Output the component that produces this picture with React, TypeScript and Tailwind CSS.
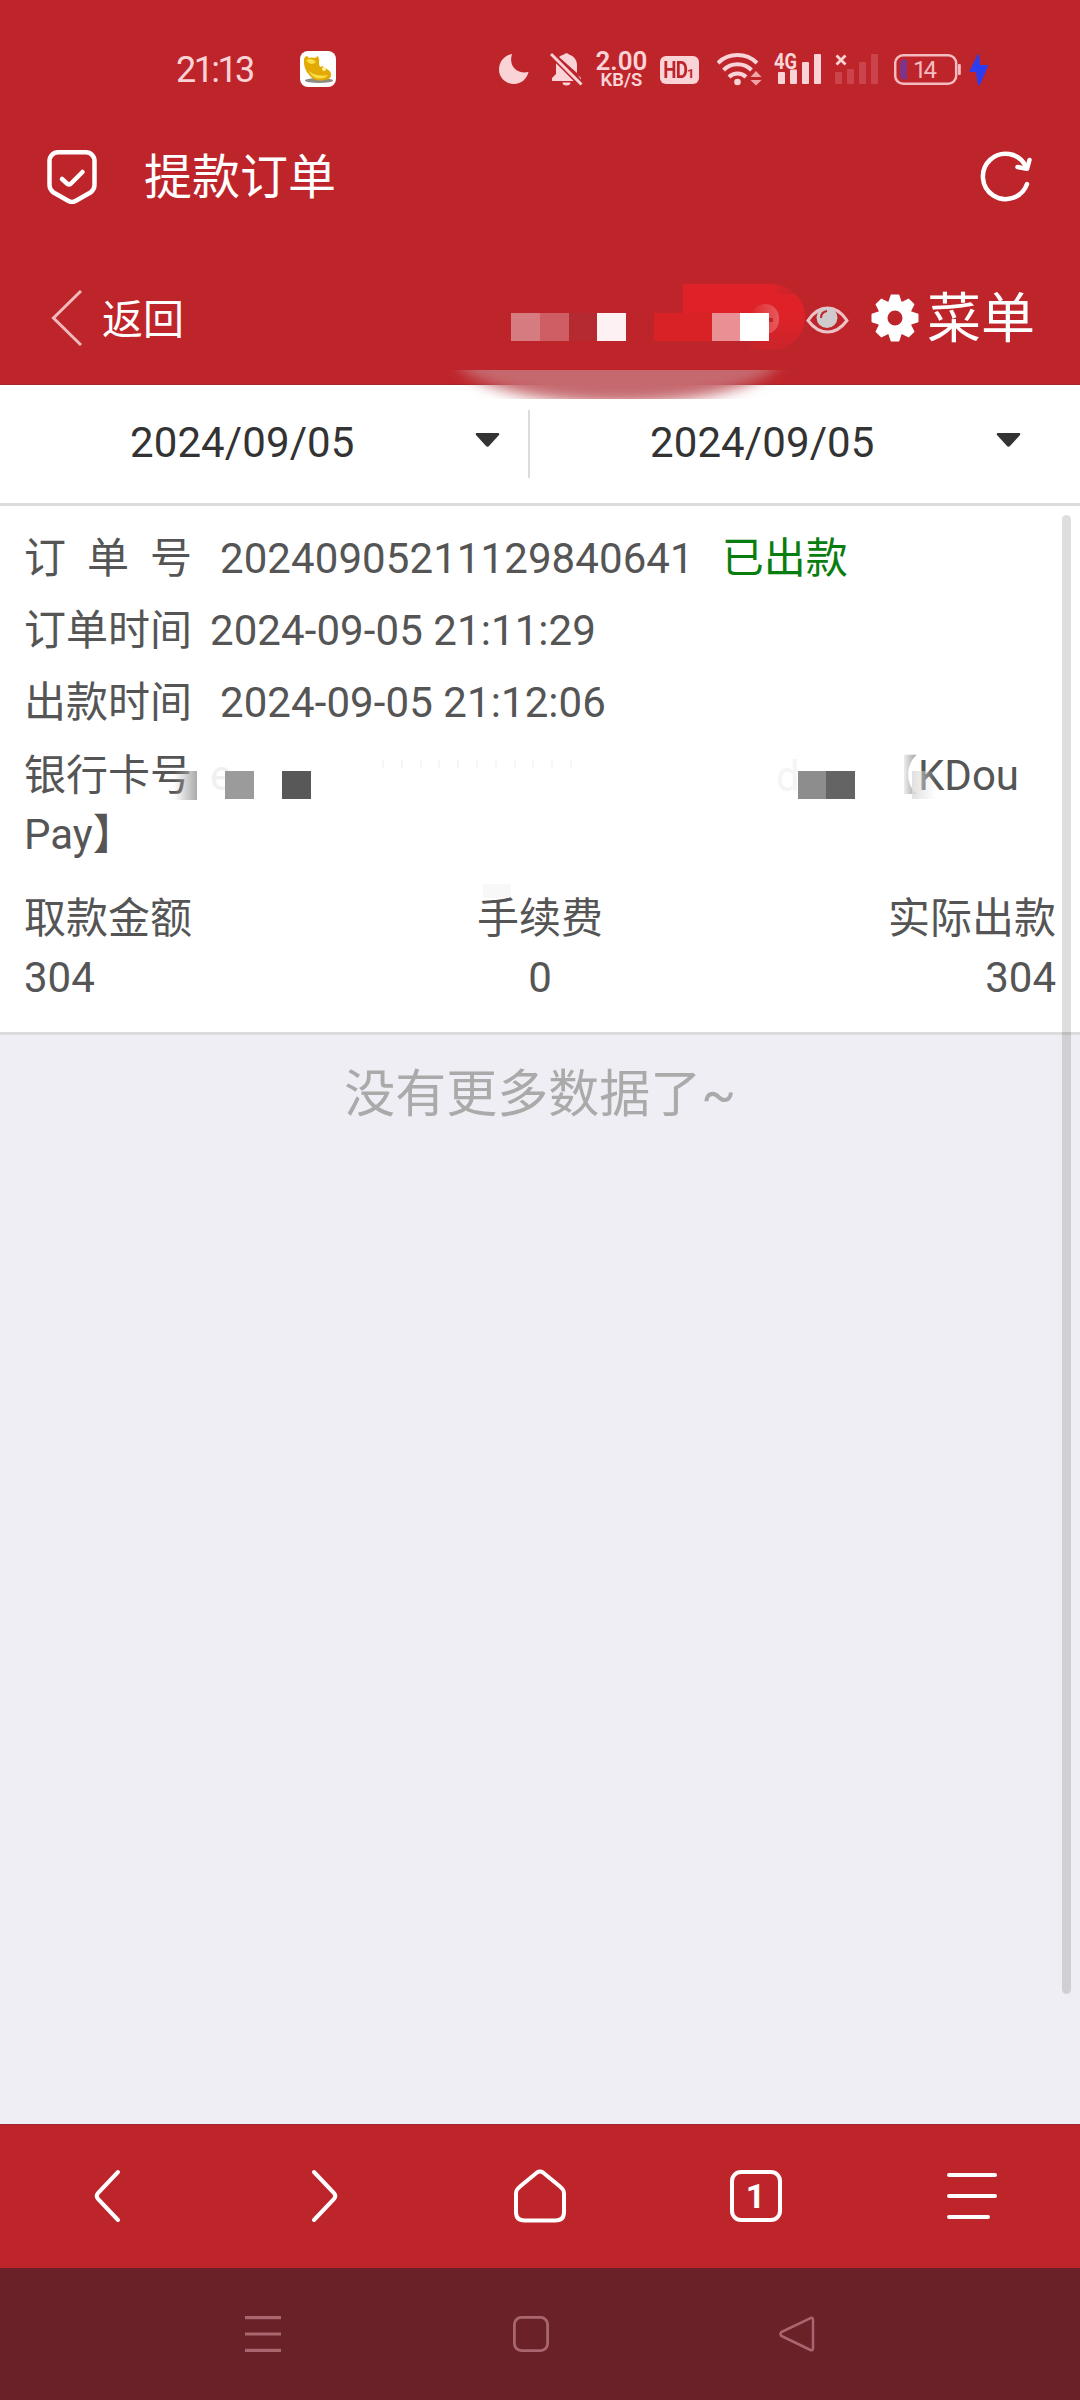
import type { ReactNode } from 'react'

const ORDER = {
  no: '20240905211129840641',
  status: '已出款',
  createdAt: '2024-09-05 21:11:29',
  paidAt: '2024-09-05 21:12:06',
}

const AMOUNTS = [
  { label: '取款金额', value: '304', align: 'text-left' },
  { label: '手续费', value: '0', align: 'text-center' },
  { label: '实际出款', value: '304', align: 'text-right' },
]

function StatusBar() {
  return (
    <div className="flex h-[137px] shrink-0 items-center text-[#f9d3d6]">
      <span className="ml-[176px] mt-[2px] w-[79px] whitespace-nowrap text-[36px] leading-[36px] tracking-[-2.600px]">21:13</span>

      {/* App notification */}
      <svg className="ml-[45px] h-9 w-9 shrink-0" viewBox="0 0 36 36">
        <rect width="36" height="36" rx="8" fill="#fff" />
        <ellipse cx="19" cy="29.500" rx="14" ry="2.500" fill="#8d8d86" />
        <path d="M4 8q1-3 3-3l2 2q3-1 6 0l3-2q2 4 1 8l1 3q3-2 5 1 6 3 6 6 1 5-6 6-10 2-15-4Q3 18 4 8z" fill="#e3a905" />
        <path d="M6 9q6-3 10 2-5 5-10-2zM9 20q7 6 19 4-4 5-12 3-6-3-7-7z" fill="#f9df45" />
        <circle cx="24" cy="18" r="2" fill="#fff3a0" />
      </svg>

      {/* Do not disturb */}
      <svg className="ml-[163px] h-9 w-[30px] shrink-0" viewBox="0 0 30 36" fill="currentColor">
        <path d="M13 3C4 4.500 0 12 0 18.500 0 27 7 33 15 33c7 0 13-5 14.500-12C19 23.500 9 16 13 3z" />
      </svg>

      {/* Muted bell */}
      <svg className="ml-[21px] h-9 w-[33px] shrink-0" viewBox="0 0 33 36" fill="currentColor">
        <path d="M14 3.500a3 3 0 0 1 5 0c5 1.500 8 5.500 8 10.500v8L9 6c1.500-1.300 3-2 5-2.500zM6 11l18 19H2v-3l4-4zM28 24l3 3v2zM12.500 31.500h8a4 3 0 0 1-8 0z" />
        <path d="M1.500 3.500l30 30" stroke="#be252b" strokeWidth="6" />
        <path d="M1 3l30.500 30.500" stroke="currentColor" strokeWidth="3" />
      </svg>

      <div className="ml-[12px] mt-[2px] flex w-[53px] flex-col items-center whitespace-nowrap font-semibold">
        <span className="text-[26px] leading-[20px]">2.00</span>
        <span className="text-[18.500px] leading-[18px]">KB/S</span>
      </div>

      <div className="ml-[12px] mt-[2px] flex h-[28px] w-[39px] items-center justify-center rounded-[6px] bg-[#f9d3d6] font-bold text-[#be252b]">
        <span className="-mx-1 text-[24px] leading-none tracking-[-1px] [transform:scaleX(0.78)]">HD</span>
        <span className="mt-[7px] text-[13px] leading-none">1</span>
      </div>

      {/* Wifi */}
      <svg className="ml-[18px] h-9 w-[46px] shrink-0" viewBox="0 0 46 36" fill="none" stroke="currentColor" strokeWidth="4">
        <path d="M1 12a28 28 0 0 1 39 0M6.500 19a20 20 0 0 1 28 0M12 26a12 12 0 0 1 17 0" />
        <circle cx="20.500" cy="31" r="3.300" fill="currentColor" stroke="none" />
        <path d="M39 20l5.500 6h-11zM39 34.500l5.500-5.500h-11z" fill="#f0a5ab" stroke="none" />
      </svg>

      {/* Sim 1 */}
      <svg className="ml-[9px] h-9 w-[50px] shrink-0 overflow-visible" viewBox="-3 0 50 36" fill="currentColor">
        <text x="-1" y="17.500" fontSize="22" fontWeight="700" textLength="23" lengthAdjust="spacingAndGlyphs">4G</text>
        <rect x="3" y="21" width="7" height="12" rx="1" />
        <rect x="15" y="18.500" width="7" height="14.500" rx="1" />
        <rect x="27" y="11" width="7" height="22" rx="1" />
        <rect x="39" y="3" width="7" height="30" rx="1" />
      </svg>

      {/* Sim 2, no signal */}
      <svg className="ml-[13px] h-9 w-[44px] shrink-0" viewBox="0 0 44 36" fill="#cb434b">
        <path d="M1.500 4.500l9 9M10.500 4.500l-9 9" stroke="#f9d3d6" strokeWidth="2.800" />
        <rect x="0" y="21" width="7" height="12" rx="1" />
        <rect x="12" y="18" width="7" height="15" rx="1" />
        <rect x="24" y="11" width="7" height="22" rx="1" />
        <rect x="36" y="3" width="7" height="30" rx="1" />
      </svg>

      {/* Battery */}
      <svg className="ml-[15px] h-9 w-[67px] shrink-0" viewBox="0 0 67 36">
        <rect x="1.200" y="4.200" width="61" height="28.600" rx="8" fill="none" stroke="#f4bcc0" strokeWidth="2.500" />
        <path d="M13 8.500v20h-3a4 4 0 0 1-4-4v-12a4 4 0 0 1 4-4z" fill="#7e3589" />
        <rect x="64" y="13" width="2.800" height="11" rx="1" fill="#f4bcc0" />
        <text x="31" y="27" fontSize="24" textAnchor="middle" textLength="24" fill="#f4bcc0">14</text>
      </svg>
      <svg className="ml-[8px] h-9 w-5 shrink-0" viewBox="0 0 20 36" fill="#2c3df0">
        <path d="M9 3L0 21h7l2 13h2l8.500-20H11L10 3z" />
      </svg>
    </div>
  )
}

function TitleBar() {
  return (
    <div className="flex h-[79px] shrink-0 items-center text-white">
      <svg className="ml-[47px] h-[54px] w-[50px]" viewBox="0 0 50 54" fill="none" stroke="currentColor" strokeWidth="4.500" strokeLinecap="round" strokeLinejoin="round">
        <path d="M11 2.300h28a8.500 8.500 0 0 1 8.500 8.500v24c0 4-1.500 6-4.500 8L28.500 51a7 7 0 0 1-7 0L7 42.800c-3-2-4.500-4-4.500-8v-24A8.500 8.500 0 0 1 11 2.300z" />
        <path d="M15 29l5.500 5q1.500 1 3 0L35.500 22" />
      </svg>
      <h1 className="ml-[47px] mt-[3px] flex-1 text-[48px] leading-none">提款订单</h1>
      <svg className="mr-[48px] mb-[2px] h-[52px] w-[52px]" viewBox="0 0 52 52" fill="none" stroke="currentColor" strokeWidth="4.500" strokeLinecap="round" strokeLinejoin="round">
        <path d="M47 34A22.700 22.700 0 1 1 45.500 15.500" />
        <path d="M37.500 17l9.500 1.800L49.500 10" />
      </svg>
    </div>
  )
}

// Blurred account name and balance
function AccountMask() {
  return (
    <div className="relative h-[68px] w-[294px]">
      <div className="absolute left-[172px] top-0 h-[66px] w-[122px] rounded-r-[34px] bg-gradient-to-b from-[#df2228] from-50% to-[#c9242a]" />
      <div className="absolute left-[172px] top-[57px] h-[11px] w-[80px] bg-gradient-to-r from-[#be252b] from-80% to-[#be252b]/0" />
      <div className="absolute left-[260px] top-0 h-[10px] w-[30px] bg-gradient-to-r from-[#be252b]/0 to-[#be252b]" />
      <div className="absolute left-[143px] top-[29px] h-[28px] w-[60px] bg-[#d82226]" />
      <div className="absolute left-[240px] top-[20px] h-[30px] w-[28px] rounded-full bg-gradient-to-l from-[#e6595e] to-[#df2228]" />
      <div className="absolute left-[258px] top-[34px] h-[4px] w-[4px] bg-[#be252b]" />
      <div className="absolute left-0 top-[29px] flex h-[28px]">
        <div className="w-[29px] bg-[#d67b80]" />
        <div className="w-[29px] bg-[#cf5e64]" />
        <div className="w-[28px] bg-[#b42a30]" />
        <div className="w-[29px] bg-[#fdf1f3]" />
        <div className="ml-[86px] w-[28px] bg-[#ea8f94]" />
        <div className="w-[29px] bg-white" />
      </div>
    </div>
  )
}

function PageHeader() {
  return (
    <div className="relative flex h-[169px] shrink-0 items-center border-b border-[#a3262c] pt-[35px] text-white">
      <svg className="ml-[51px] h-[56px] w-[31px]" viewBox="0 0 31 56" fill="none" stroke="#f0babd" strokeWidth="3">
        <path d="M30 1L2.500 28 30 55" />
      </svg>
      <span className="ml-[20px] mt-[6px] flex-1 text-[41px] leading-none">返回</span>
      <AccountMask />
      <svg className="ml-[1px] mt-[4px] h-[28px] w-[43px]" viewBox="0 0 43 28" fill="none">
        <path d="M2 14.500C8 5.500 14 2 21.500 2S35 5.500 41 14.500C35 22.500 29 26 21.500 26S8 22.500 2 14.500z" stroke="#ecc3c6" strokeWidth="3" />
        <circle cx="21" cy="11.500" r="10.500" fill="#cfcbcc" />
        <path d="M15 12q0-6 6-7" stroke="#be252b" strokeWidth="2" />
      </svg>
      <svg className="ml-[22px] h-[48px] w-[48px]" viewBox="-24 -24 48 48" fill="currentColor">
        <circle r="12.500" fill="none" stroke="currentColor" strokeWidth="10" />
        {[0, 45, 90, 135, 180, 225, 270, 315].map(deg => (
          <path key={deg} d="M-7-15L-4.500-22.500q0-1 1-1h7q1 0 1 1L7-15z" transform={`rotate(${deg})`} />
        ))}
      </svg>
      <span className="ml-[8px] mr-[45px] mt-[5px] text-[54px] leading-none">菜单</span>

      <div className="absolute left-[438px] top-[154px] h-[29px] w-[358px] overflow-hidden">
        <div className="absolute -top-[65px] left-[16px] h-[98px] w-[328px] rounded-[50%] bg-[#c5696e] blur-[7px]" />
      </div>
    </div>
  )
}

function DatePicker({ value }: { value: string }) {
  return (
    <div className="flex flex-1 items-center justify-between">
      <span className="text-[42px] leading-[59px] tracking-[0.100px] text-[#333]">{value}</span>
      <svg className="mb-[4px] h-[14px] w-[25px]" viewBox="0 0 25 14">
        <path d="M2 0h21q2 0 1 2L14 13q-1.500 1.500-3 0L1 2Q0 0 2 0z" fill="#333" />
      </svg>
    </div>
  )
}

function OrderRow({ label, children }: { label: string; children: ReactNode }) {
  return (
    <div className="flex">
      <span className="flex w-[168px] shrink-0 justify-between">
        {label.split('').map(ch => <span key={ch}>{ch}</span>)}
      </span>
      {children}
    </div>
  )
}

function OrderCard() {
  return (
    <div className="shrink-0 border-b-[3px] border-[#dcdcdc] bg-white px-6 pb-[25px] pt-[23px] text-[42px] leading-[59px] text-[#555]">
      <div className="flex flex-col gap-[13px]">
        <OrderRow label="订单号">
          <span className="ml-[28px] tracking-[0.080px]">{ORDER.no}</span>
          <span className="ml-[28px] text-[#0a7d10]">{ORDER.status}</span>
        </OrderRow>
        <OrderRow label="订单时间">
          <span className="ml-[18px] tracking-[0.080px]">{ORDER.createdAt}</span>
        </OrderRow>
        <OrderRow label="出款时间">
          <span className="ml-[28px] tracking-[0.080px]">{ORDER.paidAt}</span>
        </OrderRow>

        {/* Card number is masked between the label and the bank name */}
        <div className="relative mt-[1px]">
          <div className="flex justify-between pr-[37px]">
            <span>银行卡号</span>
            <span>
              <span className="bg-gradient-to-r from-white from-60% to-[#999] bg-clip-text text-transparent">【</span>
              KDou
            </span>
          </div>
          <div>Pay】</div>
          <div className="absolute left-[150px] top-[25px] h-[29px] w-[23px] bg-gradient-to-r from-transparent to-[#aaa]" />
          <div className="absolute left-[186px] top-[14px] leading-[32px] text-[#f0f0f0]">e</div>
          <div className="absolute left-[201px] top-[25px] h-[28px] w-[29px] bg-[#9b9b9b]" />
          <div className="absolute left-[258px] top-[25px] h-[28px] w-[29px] bg-[#585858]" />
          <div className="absolute left-[358px] top-[14px] flex h-[8px] w-[190px] justify-between">
            {[...Array(11)].map((_, i) => <div key={i} className="w-[2px] bg-[#f6f6f6]" />)}
          </div>
          <div className="absolute left-[752px] top-[11px] leading-[40px] text-[#f5f5f5]">d</div>
          <div className="absolute left-[774px] top-[25px] h-[28px] w-[29px] bg-[#8d8d8d]" />
          <div className="absolute left-[802px] top-[25px] h-[28px] w-[29px] bg-[#646464]" />
          <div className="absolute left-[888px] top-[25px] h-[28px] w-[24px] bg-gradient-to-r from-[#ddd]/90 to-transparent" />
        </div>
      </div>

      <div className="relative mt-[25px] grid grid-cols-3">
        <div className="absolute left-[459px] -top-[5px] h-[14px] w-[28px] bg-[#f8f8f8]" />
        {AMOUNTS.map(a => (
          <div key={a.label} className={`relative ${a.align}`}>
            <div>{a.label}</div>
            <div>{a.value}</div>
          </div>
        ))}
      </div>
    </div>
  )
}

function BrowserBar() {
  return (
    <div className="flex h-[144px] shrink-0 items-center border-t border-[#a3262c] bg-[#be252b] pb-[1px] text-white">
      <div className="grid w-full grid-cols-5 justify-items-center [&>svg]:h-[54px] [&>svg]:w-[54px]">
        <svg viewBox="0 0 54 54" fill="none" stroke="currentColor" strokeWidth="4" strokeLinecap="round">
          <path d="M36 3L16 24q-2.500 3 0 6l20 21" transform="translate(1 0)" />
        </svg>
        <svg viewBox="0 0 54 54" fill="none" stroke="currentColor" strokeWidth="4" strokeLinecap="round">
          <path d="M17 3l20 21q2.500 3 0 6L17 51" />
        </svg>
        <svg viewBox="0 0 54 54" fill="none" stroke="currentColor" strokeWidth="4" strokeLinejoin="round">
          <path d="M24 3.500q3-2 6 0l17 14q4 3 4 7V43q0 8.500-8.500 8.500h-31Q3 51.500 3 43V24.500q0-4 4-7z" />
        </svg>
        <svg viewBox="0 0 54 54" fill="none" stroke="currentColor" strokeWidth="4">
          <rect x="3" y="3" width="48" height="48" rx="9" />
          <text x="26.500" y="39" fill="currentColor" stroke="none" fontSize="34" fontWeight="700" textAnchor="middle">1</text>
        </svg>
        <svg viewBox="0 0 54 54" fill="none" stroke="currentColor" strokeWidth="4" strokeLinecap="round">
          <path d="M4 6h46M4 27h46M4 48h39" />
        </svg>
      </div>
    </div>
  )
}

function SystemNav() {
  return (
    <div className="flex h-[132px] shrink-0 items-center bg-[#6b2128] text-[#a9666e]">
      <svg className="ml-[245px] h-9 w-9" viewBox="0 0 36 36" stroke="currentColor" strokeWidth="3.200">
        <path d="M0 1.600h36M0 18h36M0 34.400h36" />
      </svg>
      <svg className="ml-[232px] h-9 w-9" viewBox="0 0 36 36" fill="none" stroke="currentColor" strokeWidth="2.800">
        <rect x="1.400" y="1.400" width="33.200" height="33.200" rx="7" />
      </svg>
      <svg className="ml-[230px] h-9 w-9" viewBox="0 0 36 36" fill="none" stroke="currentColor" strokeWidth="2.500" strokeLinejoin="round">
        <path d="M31.500 2.200L2.500 16q-2 2 0 4l29 14q2.500 1 2.500-2V4q0-3-2.500-1.800z" />
      </svg>
    </div>
  )
}

export default function App() {
  return (
    <div className="relative flex h-[2400px] w-[1080px] flex-col overflow-hidden bg-[#efeef4] font-[Roboto,'Noto_Sans_CJK_SC',sans-serif]">
      <header className="relative z-10 flex shrink-0 flex-col bg-[#be252b]">
        <StatusBar />
        <TitleBar />
        <PageHeader />
      </header>

      {/* Date filter */}
      <div className="flex h-[121px] shrink-0 items-start border-b-[3px] border-[#dcdcdc] bg-white pt-[25px]">
        <div className="flex h-[68px] w-[528px] items-center pb-[4px] pl-[130px] pr-[28px]"><DatePicker value="2024/09/05" /></div>
        <div className="h-[68px] w-[2px] bg-[#dcdcdc]" />
        <div className="flex h-[68px] w-[550px] items-center pb-[4px] pl-[120px] pr-[59px]"><DatePicker value="2024/09/05" /></div>
      </div>

      <OrderCard />

      <main className="flex-1 pt-[28px] text-center text-[51px] leading-[64px] text-[#aaa]">没有更多数据了~</main>

      <BrowserBar />
      <SystemNav />

      <div className="absolute left-[1062px] top-[515px] h-[1479px] w-[9px] rounded-full bg-black/[0.13]" />
    </div>
  )
}
